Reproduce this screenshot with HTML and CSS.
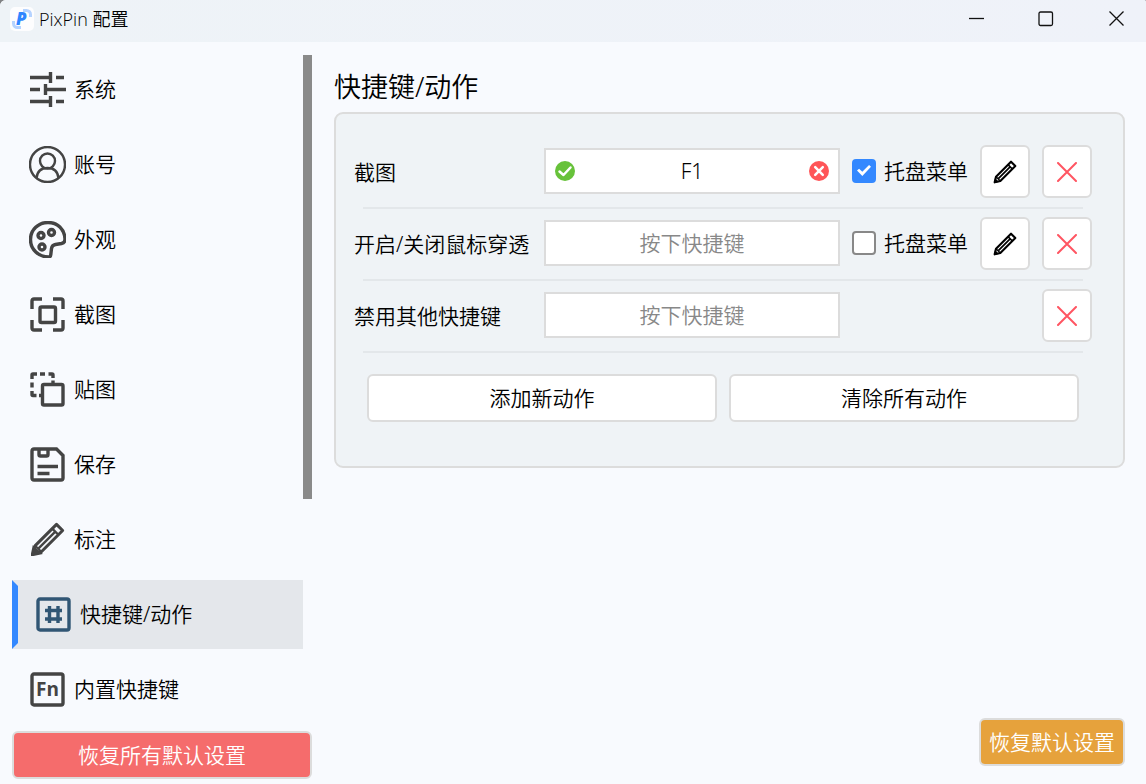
FILE: index.html
```
<!DOCTYPE html>
<html lang="zh-CN">
<head>
<meta charset="utf-8">
<meta name="viewport" content="width=device-width, initial-scale=1">
<title>PixPin 配置</title>
<link rel="stylesheet" href="styles.css">
</head>
<body>
<svg class="symbols" aria-hidden="true">
  <symbol id="pencil" viewBox="0 0 36 36">
    <path d="M2.500 33.500 4.500 25 27 2.500 33.500 9 11 31.500Z" fill="none" stroke="currentColor" stroke-width="3.200" stroke-linejoin="round"/>
    <path d="M22.500 7 29 13.500M8 28 26 10" fill="none" stroke="currentColor" stroke-width="2.500"/>
    <path d="M4.500 25 11 31.500" fill="none" stroke="currentColor" stroke-width="2"/>
    <path d="M1.500 34.500 3 27.500 9 33Z" fill="currentColor"/>
  </symbol>
  <symbol id="cross" viewBox="0 0 20 20">
    <path d="M1 1 19 19M19 1 1 19" fill="none" stroke="currentColor" stroke-width="2" stroke-linecap="round"/>
  </symbol>
</svg>
<div class="window">
  <header class="titlebar">
    <svg class="logo" viewBox="0 0 24 24" aria-hidden="true">
      <rect width="24" height="24" rx="5" fill="#fdfdfe"/>
      <path d="M13 3.500h3.500a4 4 0 0 1 4 4V10" fill="none" stroke="#b5d3ff" stroke-width="3"/>
      <path d="M11 20.500H7.500a4 4 0 0 1-4-4V14" fill="none" stroke="#b5d3ff" stroke-width="3"/>
      <text class="logo-letter" x="6" y="18">P</text>
    </svg>
    <span class="window-title">PixPin 配置</span>
    <div class="window-controls">
      <button class="window-button" type="button" aria-label="最小化"><svg viewBox="0 0 16 16"><path d="M1 7.500h15"/></svg></button>
      <button class="window-button" type="button" aria-label="最大化"><svg viewBox="0 0 16 16"><rect x="1" y="1" width="13.500" height="13.500" rx="1.500"/></svg></button>
      <button class="window-button" type="button" aria-label="关闭"><svg viewBox="0 0 16 16"><path d="M1.500 .5 15.500 14.500M15.500 .5 1.500 14.500"/></svg></button>
    </div>
  </header>
  <div class="content">
    <aside class="sidebar">
      <div class="nav-area">
        <nav class="nav">
          <a class="nav-item" href="#system"><svg class="nav-icon" viewBox="0 0 37 37"><path d="M1 6.500h20.500M27 6.500h8M21.500 1v11M1 18.500h10M16 18.500h21M16.500 13v11M1 30.500h20.500M27 30.500h8M21.500 25v11"/></svg><span class="nav-label">系统</span></a>
          <a class="nav-item" href="#account"><svg class="nav-icon thin" viewBox="0 0 37 37"><circle cx="18.500" cy="18.500" r="17.500"/><circle cx="18.500" cy="15" r="7.500"/><path d="M7.500 32c.8-7 5.200-10 11-10s10.200 3 11 10"/></svg><span class="nav-label">账号</span></a>
          <a class="nav-item" href="#appearance"><svg class="nav-icon" viewBox="0 0 37 37"><path d="M20 36C9.500 36 1.500 28.500 1.500 18.500S9.500 1.500 19 1.500c9.500 0 16.500 6.500 17 16.500.1 3-1.200 4-3.500 4.500l-6 1c-2.600.5-3.700 1.800-4 4l-.7 6c-.2 1.700-.6 2.500-1.800 2.500Z"/><circle cx="12" cy="14.500" r="3"/><circle cx="22.500" cy="11.500" r="3"/><circle cx="13" cy="26" r="3"/></svg><span class="nav-label">外观</span></a>
          <a class="nav-item" href="#capture"><svg class="nav-icon" viewBox="0 0 37 37"><path d="M3 13V5Q3 3 5 3h8M24 3h8Q34 3 34 5v8M34 24v8q0 2-2 2h-8M13 34H5q-2 0-2-2v-8"/><rect x="11" y="11" width="15.500" height="15.500" rx="1.500"/></svg><span class="nav-label">截图</span></a>
          <a class="nav-item" href="#pin"><svg class="nav-icon" viewBox="0 0 37 37"><path d="M3 8V4q0-1 1-1h4M11 3h5M19.500 3H23q1 0 1 1v3M24 9.500V13M3 11.500v5M3 20v3.500q0 1 1 1h3.500M10 24.500h3"/><rect x="13.500" y="13.500" width="20.500" height="20.500" rx="1.500"/></svg><span class="nav-label">贴图</span></a>
          <a class="nav-item" href="#save"><svg class="nav-icon" viewBox="0 0 37 37"><path d="M5 3h22.500L34 9.500V32q0 2-2 2H5q-2 0-2-2V5Q3 3 5 3ZM10 3v5.500q0 1.500 1.500 1.500h6q1.500 0 1.500-1.500V3M8.500 20.500H29M8.500 27.500h12"/></svg><span class="nav-label">保存</span></a>
          <a class="nav-item" href="#annotate"><svg class="nav-icon"><use href="#pencil" x="2" y="1" width="34" height="34"/></svg><span class="nav-label">标注</span></a>
          <a class="nav-item active" href="#hotkeys" aria-current="page"><svg class="nav-icon" viewBox="0 0 37 37"><rect x="3" y="3" width="31" height="31" rx="2"/><path d="M10 14.500h17M10 23h17M14.500 10v17M23 10v17"/></svg><span class="nav-label">快捷键/动作</span></a>
          <a class="nav-item" href="#builtin"><svg class="nav-icon" viewBox="0 0 37 37"><rect x="3" y="3" width="31" height="31" rx="2"/><text class="fn-letters" x="18.500" y="25" text-anchor="middle">Fn</text></svg><span class="nav-label">内置快捷键</span></a>
        </nav>
        <div class="scroll-thumb"></div>
      </div>
      <button class="button danger" type="button">恢复所有默认设置</button>
    </aside>
    <main class="page">
      <h1 class="page-title">快捷键/动作</h1>
      <section class="card">
        <div class="action-row">
          <label class="action-name" for="key-capture">截图</label>
          <div class="key-field">
            <input class="key-input" id="key-capture" type="text" value="F1">
            <svg class="key-status" viewBox="0 0 20 20" aria-hidden="true"><circle cx="10" cy="10" r="10" fill="#67c23a"/><path d="M4.500 10.500 8.500 14 15.500 6.500" fill="none" stroke="#fff" stroke-width="2.500" stroke-linecap="round" stroke-linejoin="round"/></svg>
            <button class="key-clear" type="button" aria-label="清除"><svg viewBox="0 0 20 20"><circle cx="10" cy="10" r="10" fill="#ff5558"/><path d="M6.200 6.200 13.800 13.800M13.800 6.200 6.200 13.800" stroke="#fff" stroke-width="2.500" stroke-linecap="round"/></svg></button>
          </div>
          <label class="tray"><input class="check" type="checkbox" checked>托盘菜单</label>
          <button class="icon-button edit" type="button" aria-label="编辑"><svg><use href="#pencil"/></svg></button>
          <button class="icon-button remove" type="button" aria-label="删除"><svg><use href="#cross"/></svg></button>
        </div>
        <div class="action-row">
          <label class="action-name" for="key-through">开启/关闭鼠标穿透</label>
          <div class="key-field"><input class="key-input" id="key-through" type="text" placeholder="按下快捷键"></div>
          <label class="tray"><input class="check" type="checkbox">托盘菜单</label>
          <button class="icon-button edit" type="button" aria-label="编辑"><svg><use href="#pencil"/></svg></button>
          <button class="icon-button remove" type="button" aria-label="删除"><svg><use href="#cross"/></svg></button>
        </div>
        <div class="action-row">
          <label class="action-name" for="key-disable">禁用其他快捷键</label>
          <div class="key-field"><input class="key-input" id="key-disable" type="text" placeholder="按下快捷键"></div>
          <button class="icon-button remove" type="button" aria-label="删除"><svg><use href="#cross"/></svg></button>
        </div>
        <div class="card-actions">
          <button class="button" type="button">添加新动作</button>
          <button class="button" type="button">清除所有动作</button>
        </div>
      </section>
      <button class="button warning" type="button">恢复默认设置</button>
    </main>
  </div>
</div>
</body>
</html>
```
FILE: styles.css
```
* {
  box-sizing: border-box;
}

body {
  margin: 0;
  background: #808284;
  color: #000;
  font: 350 21px/28px "Noto Sans", "Noto Sans CJK SC", sans-serif;
}

button,
input {
  margin: 0;
  font: inherit;
  color: inherit;
}

button {
  padding: 0;
  cursor: pointer;
}

.symbols {
  position: absolute;
  width: 0;
  height: 0;
}

.window {
  display: flex;
  flex-direction: column;
  height: 100vh;
  overflow: hidden;
  border-radius: 6px 2px 0 0;
  background: #f8fafe;
}

.titlebar {
  display: flex;
  align-items: center;
  flex: none;
  height: 42px;
  padding-left: 10px;
  padding-bottom: 4px;
  background: linear-gradient(90deg, #eef3f7, #eff2f9);
}

.logo {
  width: 24px;
  height: 24px;
  margin-right: 5px;
}

.logo-letter {
  font: italic 800 17px "Open Sans", sans-serif;
  fill: #2f86ff;
}

.window-title {
  font-family: "Open Sans", "Noto Sans CJK SC", sans-serif;
  font-size: 18px;
  line-height: 24px;
}

.window-controls {
  display: flex;
  gap: 10px;
  margin-left: auto;
}

.window-button {
  display: grid;
  place-items: center;
  width: 60px;
  height: 38px;
  border: 0;
  background: none;
}

.window-button svg {
  width: 16px;
  height: 16px;
  fill: none;
  stroke: #111;
  stroke-width: 1.300;
}

.content {
  display: flex;
  flex: 1;
  min-height: 0;
}

.sidebar {
  display: flex;
  flex-direction: column;
  flex: none;
  gap: 7px;
  width: 312px;
  padding: 13px 0 5px 12px;
}

.nav-area {
  display: flex;
  flex: 1;
  min-height: 0;
  overflow: hidden;
}

.nav {
  display: flex;
  flex-direction: column;
  flex: 1;
  gap: 6px;
}

.nav-item {
  display: flex;
  align-items: center;
  flex: none;
  gap: 8px;
  height: 69px;
  padding-left: 17px;
  color: inherit;
  text-decoration: none;
}

.nav-item.active {
  border: solid transparent;
  border-width: 6px 0 6px 6px;
  border-left-color: #3388ff;
  background: #e4e7eb;
}

.nav-label {
  padding-bottom: 2px;
}

.nav-icon {
  width: 37px;
  height: 37px;
  fill: none;
  stroke: #444;
  stroke-width: 3.400;
  color: #444;
}

.nav-icon.thin {
  stroke-width: 2.400;
}

.active .nav-icon {
  stroke: #305674;
}

.fn-letters {
  font: 700 19px "Open Sans", sans-serif;
  fill: #444;
  stroke: none;
}

.scroll-thumb {
  width: 9px;
  height: 66.4%;
  background: #8a8a8a;
}

.button {
  height: 48px;
  border: 2px solid #dcdcdc;
  border-radius: 6px;
  background: #fff;
}

.button.danger {
  flex: none;
  background: #f56c6c;
  color: #fff;
}

.button.warning {
  align-self: flex-end;
  flex: none;
  margin-top: auto;
  padding: 0 8px;
  background: #e6a23c;
  color: #fff;
}

.page {
  display: flex;
  flex-direction: column;
  flex: 1;
  min-width: 0;
  padding: 27px 21px 18px 22px;
}

.page-title {
  margin: 0 0 7px;
  font-size: 27px;
  line-height: 36px;
  font-weight: 350;
}

.card {
  padding: 23px 31px 44px 18px;
  border: 2px solid #dcdcdc;
  border-radius: 9px;
  background: #eff3f6;
}

.action-row {
  display: grid;
  grid-template-columns: 178px 1fr 116px 50px 50px;
  align-items: center;
  gap: 12px;
  padding: 8px 0 11px;
  background: linear-gradient(#e3e7ea, #e3e7ea) center bottom / calc(100% - 18px) 2px no-repeat;
}

.action-name {
  white-space: nowrap;
}

.key-field {
  position: relative;
  display: flex;
  padding-bottom: 2px;
}

.key-input {
  width: 100%;
  min-width: 0;
  height: 46px;
  padding: 0 36px;
  border: 2px solid #dcdcdc;
  border-radius: 0;
  background: #fff;
  text-align: center;
  outline: none;
}

.key-input::placeholder {
  color: #888;
  opacity: 1;
}

.key-status,
.key-clear {
  position: absolute;
  top: 13px;
  width: 20px;
  height: 20px;
}

.key-status {
  left: 11px;
}

.key-clear {
  right: 11px;
  border: 0;
  background: none;
}

.key-clear svg {
  display: block;
}

.tray {
  display: flex;
  align-items: center;
  gap: 8px;
  padding-bottom: 2px;
  white-space: nowrap;
}

.check {
  display: grid;
  place-items: center;
  flex: none;
  width: 24px;
  height: 24px;
  appearance: none;
  border: 2px solid #888;
  border-radius: 4px;
  background: #fff;
}

.check:checked {
  border-color: #3388ff;
  background: #3388ff;
}

.check:checked::before {
  content: "";
  width: 14px;
  height: 11px;
  background: #fff;
  clip-path: polygon(0 50%, 15% 34%, 38% 62%, 86% 0, 100% 16%, 38% 100%);
}

.icon-button {
  display: grid;
  place-items: center;
  height: 53px;
  border: 2px solid #dcdcdc;
  border-radius: 6px;
  background: #fff;
}

.icon-button svg {
  width: 24px;
  height: 24px;
}

.icon-button.remove {
  grid-column: 5;
  color: #ff5562;
}

.icon-button.remove svg {
  width: 20px;
  height: 20px;
}

.card-actions {
  display: grid;
  grid-template-columns: 1fr 1fr;
  gap: 12px;
  padding: 21px 13px 0;
}
```
